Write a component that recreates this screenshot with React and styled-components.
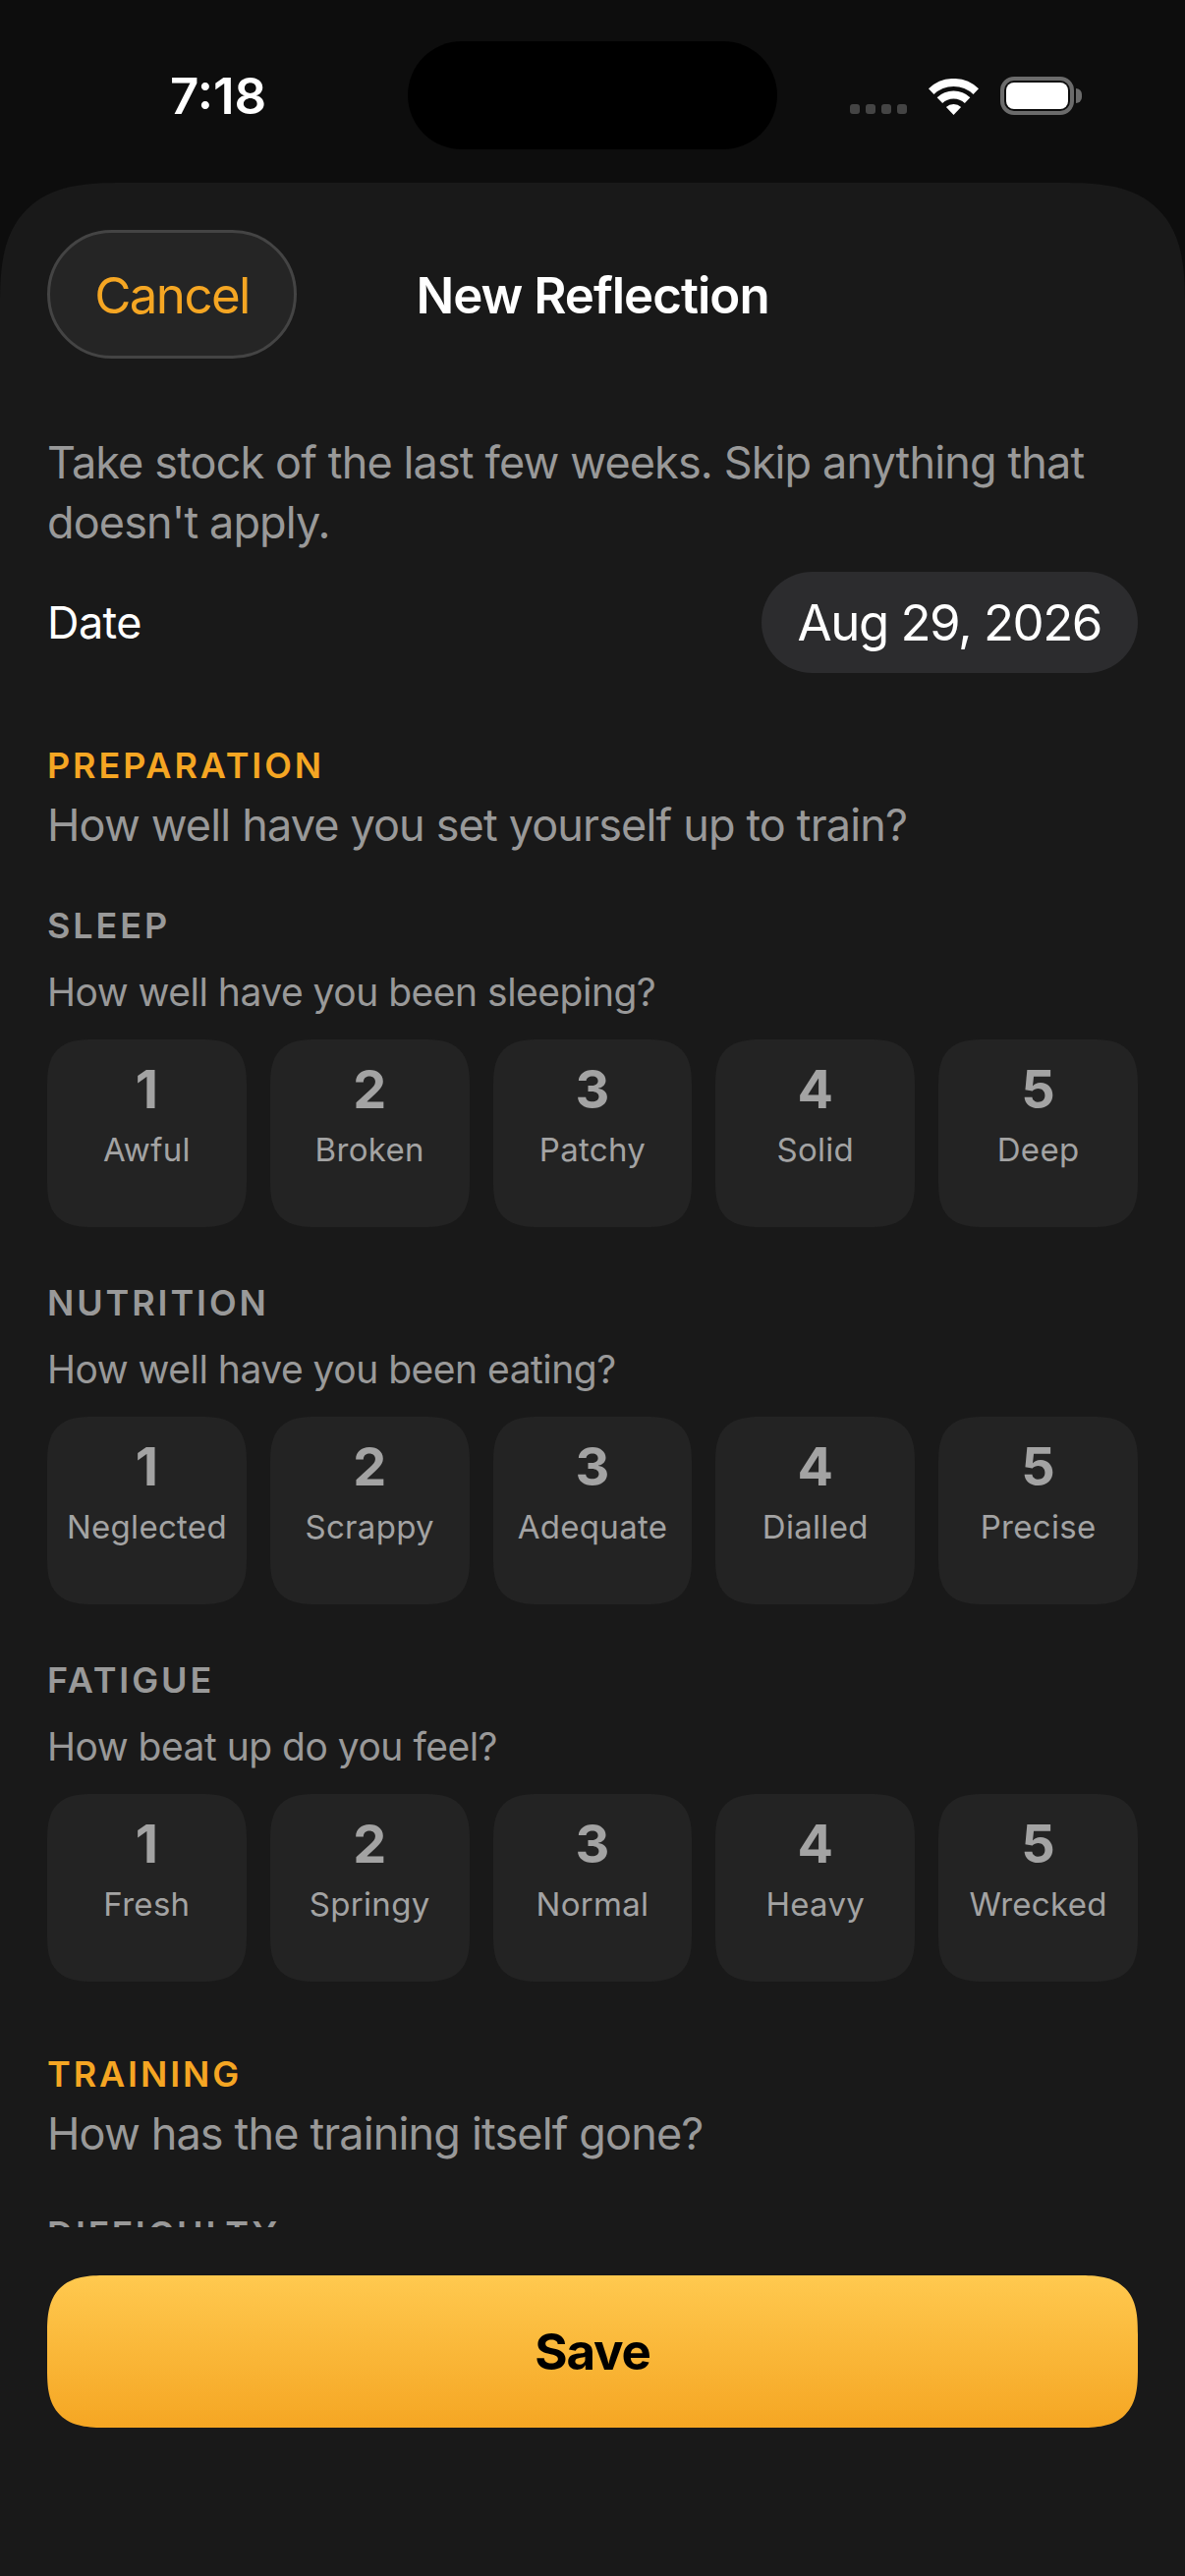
import styled, { createGlobalStyle } from 'styled-components';

const GlobalStyle = createGlobalStyle`
    html, body {
        margin: 0;
        padding: 0;
        background: #0d0d0d;
    }

    * {
        box-sizing: border-box;
    }
`;

const Screen = styled.div`
    position: relative;
    width: 1206px;
    height: 2622px;
    display: flex;
    flex-direction: column;
    overflow: hidden;
    background: #0d0d0d;
    font-family: Inter, 'Liberation Sans', sans-serif;
`;

const StatusBar = styled.div`
    height: 186px;
    flex-shrink: 0;
    display: flex;
    justify-content: space-between;
    align-items: flex-start;
    padding: 0 113px 0 173px;
`;

const Clock = styled.span`
    margin-top: 67px;
    font-size: 51px;
    line-height: 62px;
    font-weight: 600;
    color: #fff;
`;

const Island = styled.div`
    position: absolute;
    top: 42px;
    left: 415px;
    width: 376px;
    height: 110px;
    border-radius: 55px;
    background: #000;
`;

const StatusIcons = styled.div`
    margin-top: 78px;
    display: flex;
    align-items: flex-end;
    height: 39px;
`;

const SignalDots = styled.div`
    display: flex;
    gap: 6px;
    margin-right: 22px;
    margin-bottom: 1px;
`;

const SignalDot = styled.span`
    width: 10px;
    height: 10px;
    border-radius: 3px;
    background: #444;
`;

const Battery = styled.div`
    position: relative;
    width: 75px;
    height: 39px;
    margin-left: 22px;
    padding: 2px;
    border: 4px solid #6b6b6b;
    border-radius: 14px;

    &::before {
        content: '';
        display: block;
        height: 100%;
        border-radius: 8px;
        background: #fff;
    }

    &::after {
        content: '';
        position: absolute;
        top: 8px;
        right: -12px;
        width: 6px;
        height: 15px;
        border-radius: 0 6px 6px 0;
        background: #6b6b6b;
    }
`;

const Sheet = styled.div`
    flex: 1;
    min-height: 0;
    display: flex;
    flex-direction: column;
    border-radius: 125px 125px 0 0;
    corner-shape: superellipse(1.5);
    background: #191919;
`;

const Header = styled.div`
    flex-shrink: 0;
    display: grid;
    grid-template-columns: 1fr auto 1fr;
    align-items: center;
    padding: 48px 48px 0;
`;

const CancelButton = styled.button`
    justify-self: start;
    width: 254px;
    height: 131px;
    padding: 2px 0 0;
    border: 3px solid #444;
    border-radius: 66px;
    background: #252525;
    color: #f5a623;
    font-family: inherit;
    font-size: 51px;
    letter-spacing: -1.6px;
`;

const Title = styled.h1`
    margin: 2px 0 0;
    font-size: 51px;
    line-height: 62px;
    font-weight: 600;
    letter-spacing: -1px;
    color: #fff;
`;

const Scroll = styled.div`
    flex: 1;
    min-height: 0;
    overflow: hidden;
    padding: 75px 48px 0;
`;

const Intro = styled.p`
    margin: 0;
    font-size: 45px;
    line-height: 61px;
    letter-spacing: -0.87px;
    color: #999;
`;

const DateRow = styled.div`
    margin-top: 20px;
    display: flex;
    justify-content: space-between;
    align-items: center;
`;

const DateLabel = styled.span`
    font-size: 45px;
    letter-spacing: -0.6px;
    color: #fff;
`;

const DatePill = styled.div`
    height: 103px;
    padding: 0 37px;
    display: flex;
    align-items: center;
    border-radius: 52px;
    background: #2c2c2e;
    font-size: 51px;
    letter-spacing: -1.5px;
    color: #fff;
`;

const Section = styled.section`
    margin-top: 72px;
`;

const SectionTitle = styled.div`
    font-size: 36px;
    line-height: 44px;
    font-weight: 600;
    letter-spacing: 0.08em;
    color: #f5a623;
`;

const SectionPrompt = styled.p`
    margin: 14px 0 0;
    font-size: 45px;
    line-height: 50px;
    letter-spacing: -0.85px;
    color: #999;
`;

const MetricTitle = styled.div`
    margin-top: 55px;
    font-size: 36px;
    line-height: 44px;
    font-weight: 600;
    letter-spacing: 0.08em;
    color: #999;
`;

const MetricPrompt = styled.p`
    margin: 21px 0 0;
    font-size: 39px;
    line-height: 50px;
    letter-spacing: -0.5px;
    color: #999;
`;

const RatingRow = styled.div`
    margin-top: 23px;
    display: grid;
    grid-template-columns: repeat(5, 1fr);
    gap: 24px;
`;

const RatingCard = styled.div`
    height: 191px;
    padding-top: 21px;
    display: flex;
    flex-direction: column;
    align-items: center;
    border-radius: 48px;
    corner-shape: superellipse(1.5);
    background: #232323;
`;

const RatingNumber = styled.span`
    font-size: 54px;
    line-height: 60px;
    font-weight: 700;
    color: #a3a3a3;
`;

const RatingLabel = styled.span`
    margin-top: 9px;
    font-size: 33px;
    line-height: 44px;
    letter-spacing: 0.3px;
    color: #a3a3a3;
`;

const Footer = styled.div`
    flex-shrink: 0;
    padding: 49px 48px 151px;
`;

const SaveButton = styled.button`
    display: block;
    width: 100%;
    height: 155px;
    border: 0;
    border-radius: 60px;
    corner-shape: superellipse(1.5);
    background: linear-gradient(180deg, #ffc94f 0%, #f5a623 100%);
    color: #000;
    font-family: inherit;
    font-size: 51px;
    font-weight: 700;
    letter-spacing: -1.2px;
`;

const WifiIcon = () => (
    <svg width="51" height="37" viewBox="0 0 51 37" fill="none">
        <path d="M2.7 13.1A33 33 0 0 1 48.3 13.1" stroke="#fff" strokeWidth="8" />
        <path d="M11.4 22.15A20.5 20.5 0 0 1 39.6 22.15" stroke="#fff" strokeWidth="8" />
        <path d="M25.5 37L17.9 29A11 11 0 0 1 33.1 29Z" fill="#fff" />
    </svg>
);

const preparation = [
    {
        title: 'SLEEP',
        prompt: 'How well have you been sleeping?',
        options: ['Awful', 'Broken', 'Patchy', 'Solid', 'Deep'],
    },
    {
        title: 'NUTRITION',
        prompt: 'How well have you been eating?',
        options: ['Neglected', 'Scrappy', 'Adequate', 'Dialled', 'Precise'],
    },
    {
        title: 'FATIGUE',
        prompt: 'How beat up do you feel?',
        options: ['Fresh', 'Springy', 'Normal', 'Heavy', 'Wrecked'],
    },
];

const App = () => {
    return (
        <Screen>
            <GlobalStyle />
            <StatusBar>
                <Clock>7:18</Clock>
                <StatusIcons>
                    <SignalDots>
                        {[0, 1, 2, 3].map((dot) => (
                            <SignalDot key={dot} />
                        ))}
                    </SignalDots>
                    <WifiIcon />
                    <Battery />
                </StatusIcons>
            </StatusBar>
            <Island />
            <Sheet>
                <Header>
                    <CancelButton>Cancel</CancelButton>
                    <Title>New Reflection</Title>
                </Header>
                <Scroll>
                    <Intro>Take stock of the last few weeks. Skip anything that doesn't apply.</Intro>
                    <DateRow>
                        <DateLabel>Date</DateLabel>
                        <DatePill>Aug 29, 2026</DatePill>
                    </DateRow>
                    <Section>
                        <SectionTitle>PREPARATION</SectionTitle>
                        <SectionPrompt>How well have you set yourself up to train?</SectionPrompt>
                        {preparation.map((metric) => (
                            <div key={metric.title}>
                                <MetricTitle>{metric.title}</MetricTitle>
                                <MetricPrompt>{metric.prompt}</MetricPrompt>
                                <RatingRow>
                                    {metric.options.map((option, index) => (
                                        <RatingCard key={option}>
                                            <RatingNumber>{index + 1}</RatingNumber>
                                            <RatingLabel>{option}</RatingLabel>
                                        </RatingCard>
                                    ))}
                                </RatingRow>
                            </div>
                        ))}
                    </Section>
                    <Section>
                        <SectionTitle>TRAINING</SectionTitle>
                        <SectionPrompt>How has the training itself gone?</SectionPrompt>
                        <MetricTitle>DIFFICULTY</MetricTitle>
                    </Section>
                </Scroll>
                <Footer>
                    <SaveButton>Save</SaveButton>
                </Footer>
            </Sheet>
        </Screen>
    );
};

export default App;
